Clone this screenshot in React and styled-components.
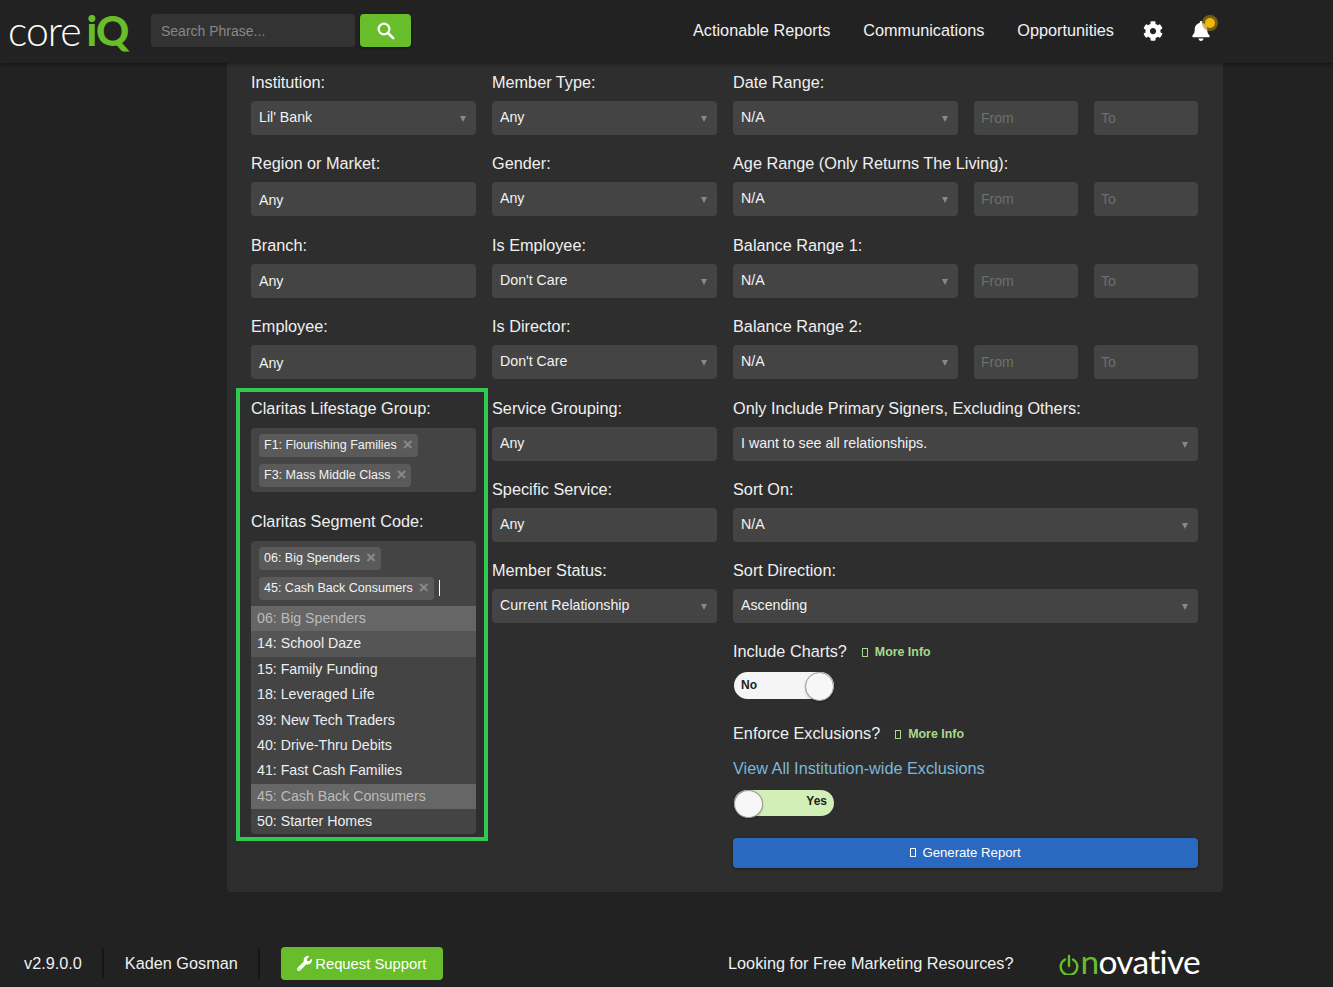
import React from "react";
import styled, { createGlobalStyle } from "styled-components";
import { FaCog, FaBell, FaWrench } from "react-icons/fa";

const Global = createGlobalStyle`
  html, body { margin: 0; padding: 0; background: #222; height: 987px; overflow: hidden; }
  * { box-sizing: border-box; }
  body { font-family: "Liberation Sans", Arial, sans-serif; color: #eee; font-size: 14.2px; }
`;

const Header = styled.header`
  position: relative; z-index: 2;
  height: 63px; background: #222; box-shadow: 0 1px 4px rgba(0,0,0,.45);
  display: flex; align-items: center; padding: 0 0 2px 8px;
`;
const Logo = styled.div`
  width: 143px; height: 61px; display: flex; align-items: center;
  font-family: Lato, sans-serif; font-size: 41px; line-height: 1; color: #fff; font-weight: 300; letter-spacing: -1px;
  span { color: #67bd2a; font-weight: 900; letter-spacing: -1px; margin-left: 6px; }
`;
const SearchInput = styled.input`
  width: 204px; height: 33px; background: #333; border: 0; border-radius: 4px; padding: 0 10px;
  color: #eee; font: 14px "Liberation Sans", sans-serif;
  &::placeholder { color: #888; opacity: 1; }
`;
const SearchButton = styled.button`
  width: 51px; height: 33px; margin-left: 5px; border: 0; border-radius: 4px; background: #67bd2a; color: #fff;
  display: flex; align-items: center; justify-content: center; padding: 0; box-shadow: 0 1px 3px rgba(0,0,0,.4);
`;
const Nav = styled.nav`
  margin-left: auto; margin-right: 122px; display: flex; align-items: center; font-size: 16.25px; color: #f2f2f2;
`;
const NavLink = styled.a`
  margin-right: ${p => p.$mr ?? 33}px; white-space: nowrap;
`;
const IconSlot = styled.span`
  display: inline-flex; color: #fff; font-size: 20px; margin-right: ${p => p.$mr || 0}px; position: relative;
`;
const Dot = styled.i`
  position: absolute; top: -3px; right: -4px; width: 10px; height: 10px; border-radius: 50%;
  background: #f2b705; box-shadow: 0 0 0 3px rgba(170,135,15,.6);
`;

const Panel = styled.main`
  width: 996px; margin-left: 227px; background: #2e2e2e; border-radius: 0 0 4px 4px;
  padding: 9px 25px 24px 24px; display: grid; grid-template-columns: 225px 225px 465px; column-gap: 16px;
  height: 829px;
`;
const Column = styled.div`display: flex; flex-direction: column;`;
const Field = styled.div`margin-bottom: ${p => p.$mb ?? 18.4}px;`;
const Label = styled.div`
  font-size: 16.25px; line-height: 21px; height: 20px; color: #f0f0f0; white-space: nowrap;
  margin-bottom: ${p => p.$mb ?? 9}px;
`;
const Select = styled.div`
  height: 34px; background: #444; border-radius: 4px; padding: 0 8px 2px; position: relative;
  display: flex; align-items: center; color: #f2f2f2;
  ${p => p.$caret && `
    &::after { content: ""; position: absolute; right: 10px; top: 15px; border: 3.5px solid transparent; border-top: 6px solid #888; border-bottom: 0; }
  `}
`;
const TextBox = styled(Select)`padding: 1px 8px 0;`;
const RangeRow = styled.div`
  display: grid; grid-template-columns: 225px 104px 104px; column-gap: 16px;
`;
const Placeholder = styled.input`
  width: 100%; height: 34px; background: #444; border: 0; border-radius: 4px; padding: 0 7px;
  font: 14px "Liberation Sans", sans-serif;
  &::placeholder { color: #6e6e6e; opacity: 1; }
`;
const Highlighted = styled.div`position: relative;`;
const Outline = styled.div`
  position: absolute; top: -10px; bottom: -7px; left: -15.5px; right: -11.5px;
  border: 4.5px solid #2ecb50; pointer-events: none;
`;
const Multi = styled.div`
  background: #444; border-radius: ${p => p.$open ? "4px 4px 0 0" : "4px"};
  padding: 6px 8px ${p => p.$open ? 6 : 5}px;
  display: flex; flex-wrap: wrap; gap: 7px 0; margin-bottom: ${p => p.$mb || 0}px;
`;
const TagRow = styled.div`width: 100%; display: flex; align-items: center; gap: 5px;`;
const Tag = styled.span`
  height: 23px; background: #5a5a5a; border-radius: 4px; padding: 0 5px 1px; display: inline-flex; align-items: center;
  font-size: 12.5px; color: #f2f2f2; white-space: nowrap;
  b { font-weight: 700; font-size: 17px; color: #8a8a8a; margin-left: 6px; line-height: 1; }
`;
const Caret = styled.i`width: 1px; height: 16px; background: #fff;`;
const List = styled.ul`
  list-style: none; margin: 0; padding: 0; background: #444; border-radius: 0 0 4px 4px; overflow: hidden;
`;
const Item = styled.li`
  height: 25.4px; line-height: 25.4px; padding-left: 6px;
  background: ${p => p.$state === "sel" ? "#666" : p.$state === "hover" ? "#555" : "transparent"};
  color: ${p => p.$state === "sel" ? "#bbb" : "#eee"};
`;
const LabelRow = styled.div`
  display: flex; align-items: center; height: 20px; padding-top: 2px; line-height: 21px; margin-bottom: ${p => p.$mb}px; font-size: 16.25px; color: #f0f0f0;
`;
const MoreInfo = styled.a`
  margin-left: 15px; font-size: 12.4px; font-weight: 700; color: #a9d98c; display: inline-flex; align-items: center; gap: 7px; padding-top: 2px;
`;
const Tofu = styled.i`
  display: inline-block; width: 6px; height: 9px; border: 1px solid currentColor;
`;
const InfoLink = styled.a`
  font-size: 16.25px; line-height: 21px; height: 20px; color: #7ab8dc; margin-bottom: 12px; display: block;
`;
const Switch = styled.div`
  width: 100px; height: ${p => p.$on ? 26 : 27}px; margin-left: 1px; border-radius: 14px; position: relative;
  background: ${p => p.$on ? "#d3efb8" : "#f5f5f5"};
  display: flex; align-items: center; justify-content: ${p => p.$on ? "flex-end" : "flex-start"};
  padding: 0 7px ${p => p.$on ? 3 : 1}px; font-size: 12px; font-weight: 700; color: #222;
  margin-bottom: ${p => p.$mb}px;
  &::after {
    content: ""; position: absolute; top: 0; ${p => p.$on ? "left: 0" : "right: 0"};
    width: 27px; height: ${p => p.$on ? 26 : 27}px; border-radius: 50%; background: #f7f7f7; border: 1px solid #999;
    box-shadow: 0 1px 2px rgba(0,0,0,.25);
  }
`;
const Generate = styled.button`
  height: 30px; width: 100%; background: #2a69c0; color: #fff; border: 0; border-radius: 4px; padding: 0;
  font: 13.2px "Liberation Sans", sans-serif; display: flex; align-items: center; justify-content: center; gap: 6px;
  box-shadow: 0 1px 3px rgba(0,0,0,.4);
`;

const Footer = styled.footer`
  margin-top: 55px; height: 33px; display: flex; align-items: center; padding-left: 24px; font-size: 16.25px; color: #f0f0f0;
`;
const FooterText = styled.span`white-space: nowrap;`;
const Divider = styled.i`width: 2px; height: 31px; background: #161616; margin: 0 ${p => p.$right}px 0 ${p => p.$left}px;`;
const Support = styled.button`
  width: 162px; height: 33px; background: #67bd2a; color: #fff; border: 0; border-radius: 4px; padding: 0;
  font: 14.8px "Liberation Sans", sans-serif; display: flex; align-items: center; justify-content: center; gap: 3px;
`;
const FooterRight = styled.div`margin-left: auto; margin-right: 133px; display: flex; align-items: center;`;
const Onovative = styled.div`
  margin-left: 46px; display: flex; align-items: center; font-family: Lato, sans-serif; font-weight: 400; font-size: 33.5px;
  line-height: 1; color: #fff; letter-spacing: -.7px; padding-bottom: 4px;
  span { color: #67bd2a; font-weight: 400; margin-left: 1px; }
  svg { margin-top: 5px; }
`;

const opts = [
  ["06: Big Spenders", "sel"], ["14: School Daze", "hover"], ["15: Family Funding"], ["18: Leveraged Life"],
  ["39: New Tech Traders"], ["40: Drive-Thru Debits"], ["41: Fast Cash Families"], ["45: Cash Back Consumers", "sel"], ["50: Starter Homes"],
];

const Range = ({ label, mb }) => (
  <Field $mb={mb}>
    <Label>{label}</Label>
    <RangeRow>
      <Select $caret>N/A</Select>
      <Placeholder placeholder="From" />
      <Placeholder placeholder="To" />
    </RangeRow>
  </Field>
);
const Drop = ({ label, value, mb, plain }) => (
  <Field $mb={mb}>
    <Label>{label}</Label>
    <Select $caret={!plain}>{value}</Select>
  </Field>
);
const Text = ({ label, value = "Any", mb }) => (
  <Field $mb={mb}>
    <Label>{label}</Label>
    <TextBox>{value}</TextBox>
  </Field>
);

export default function App() {
  return (
    <>
      <Global />
      <Header>
        <Logo>core<span>iQ</span></Logo>
        <SearchInput placeholder="Search Phrase..." />
        <SearchButton>
          <svg width="18" height="18" viewBox="0 0 18 18" fill="none" stroke="#fff" strokeLinecap="round">
            <circle cx="7" cy="7" r="5.4" strokeWidth="2.2" />
            <path d="M11 11 L16.2 16.2" strokeWidth="2.6" />
          </svg>
        </SearchButton>
        <Nav>
          <NavLink>Actionable Reports</NavLink>
          <NavLink>Communications</NavLink>
          <NavLink $mr={29}>Opportunities</NavLink>
          <IconSlot $mr={28}><FaCog /></IconSlot>
          <IconSlot><FaBell /><Dot /></IconSlot>
        </Nav>
      </Header>
      <Panel>
        <Column>
          <Drop label="Institution:" value="Lil' Bank" />
          <Text label="Region or Market:" />
          <Text label="Branch:" />
          <Text label="Employee:" mb={18.8} />
          <Highlighted>
            <Label $mb={10}>Claritas Lifestage Group:</Label>
            <Multi $mb={19}>
              <TagRow><Tag>F1: Flourishing Families<b>×</b></Tag></TagRow>
              <TagRow><Tag>F3: Mass Middle Class<b>×</b></Tag></TagRow>
            </Multi>
            <Label $mb={10}>Claritas Segment Code:</Label>
            <Multi $open>
              <TagRow><Tag>06: Big Spenders<b>×</b></Tag></TagRow>
              <TagRow><Tag>45: Cash Back Consumers<b>×</b></Tag><Caret /></TagRow>
            </Multi>
            <List>
              {opts.map(([t, s]) => <Item key={t} $state={s}>{t}</Item>)}
            </List>
            <Outline />
          </Highlighted>
        </Column>
        <Column>
          <Drop label="Member Type:" value="Any" />
          <Drop label="Gender:" value="Any" />
          <Drop label="Is Employee:" value="Don't Care" />
          <Drop label="Is Director:" value="Don't Care" mb={18.8} />
          <Drop label="Service Grouping:" value="Any" plain mb={18} />
          <Drop label="Specific Service:" value="Any" plain mb={18} />
          <Drop label="Member Status:" value="Current Relationship" />
        </Column>
        <Column>
          <Range label="Date Range:" />
          <Range label="Age Range (Only Returns The Living):" />
          <Range label="Balance Range 1:" />
          <Range label="Balance Range 2:" mb={18.8} />
          <Drop label="Only Include Primary Signers, Excluding Others:" value="I want to see all relationships." mb={18} />
          <Drop label="Sort On:" value="N/A" mb={18} />
          <Drop label="Sort Direction:" value="Ascending" mb={18} />
          <LabelRow $mb={11}>Include Charts?<MoreInfo><Tofu />More Info</MoreInfo></LabelRow>
          <Switch $mb={24}>No</Switch>
          <LabelRow $mb={15}>Enforce Exclusions?<MoreInfo><Tofu />More Info</MoreInfo></LabelRow>
          <InfoLink>View All Institution-wide Exclusions</InfoLink>
          <Switch $on $mb={22}>Yes</Switch>
          <Generate><Tofu />Generate Report</Generate>
        </Column>
      </Panel>
      <Footer>
        <FooterText>v2.9.0.0</FooterText>
        <Divider $left={20} $right={21} />
        <FooterText>Kaden Gosman</FooterText>
        <Divider $left={20} $right={21} />
        <Support><FaWrench size={15} />Request Support</Support>
        <FooterRight>
          <FooterText>Looking for Free Marketing Resources?</FooterText>
          <Onovative>
            <svg width="20" height="21" viewBox="0 0 20 21" fill="none" stroke="#67bd2a" strokeWidth="2.4" strokeLinecap="round">
              <path d="M6 5.5 A8.3 8.3 0 1 0 14 5.5" />
              <path d="M10 2 V12" />
            </svg>
            <span>n</span>ovative
          </Onovative>
        </FooterRight>
      </Footer>
    </>
  );
}
